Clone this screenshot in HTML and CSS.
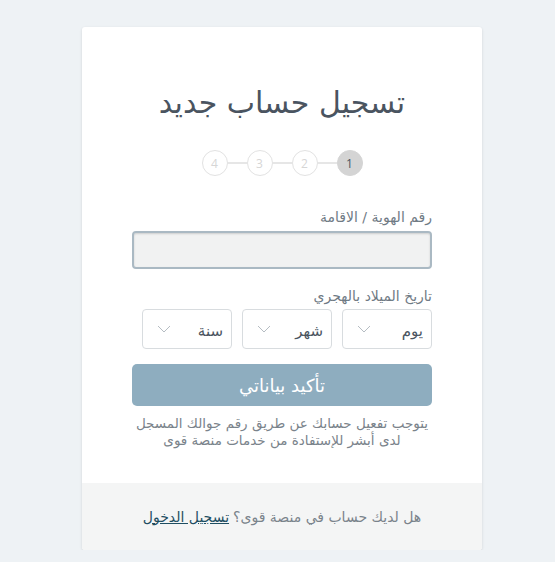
FILE: index.html
```html
<!DOCTYPE html>
<html lang="ar" dir="rtl">

<head>
    <meta charset="UTF-8">
    <meta name="viewport" content="width=device-width, initial-scale=1.0">
    <title>تسجيل حساب جديد</title>
    <link rel="stylesheet" href="styles.css">
</head>

<body>
    <div class="card">
        <div class="card-body">
            <h1 class="title">تسجيل حساب جديد</h1>

            <div class="steps">
                <span class="step active">1</span>
                <span class="step-line"></span>
                <span class="step">2</span>
                <span class="step-line"></span>
                <span class="step">3</span>
                <span class="step-line"></span>
                <span class="step">4</span>
            </div>

            <div class="form-group">
                <label for="id-number">رقم الهوية / الاقامة</label>
                <input type="text" id="id-number" class="id-input">
            </div>

            <div class="form-group">
                <label>تاريخ الميلاد بالهجري</label>
                <div class="date-row">
                    <div class="select">
                        <span>يوم</span>
                        <svg width="14" height="8" viewBox="0 0 14 8"><path d="M1 1l6 6 6-6" fill="none" stroke="#b5bcc2" stroke-width="1"/></svg>
                    </div>
                    <div class="select">
                        <span>شهر</span>
                        <svg width="14" height="8" viewBox="0 0 14 8"><path d="M1 1l6 6 6-6" fill="none" stroke="#b5bcc2" stroke-width="1"/></svg>
                    </div>
                    <div class="select">
                        <span>سنة</span>
                        <svg width="14" height="8" viewBox="0 0 14 8"><path d="M1 1l6 6 6-6" fill="none" stroke="#b5bcc2" stroke-width="1"/></svg>
                    </div>
                </div>
            </div>

            <button class="submit-btn">تأكيد بياناتي</button>

            <p class="note">يتوجب تفعيل حسابك عن طريق رقم جوالك المسجل<br>لدى أبشر للإستفادة من خدمات منصة قوى</p>
        </div>

        <div class="card-footer">
            هل لديك حساب في منصة قوى؟ <a href="#">تسجيل الدخول</a>
        </div>
    </div>
</body>

</html>
```

FILE: styles.css
```css
body {
    font-family: "DejaVu Sans", sans-serif;
    margin: 0;
    padding: 27px 0 0;
    background-color: #eef2f5;
    color: #4a5560;
}

.card {
    width: 400px;
    margin: 0 auto 0 82px;
    background: #ffffff;
    border-radius: 3px;
    box-shadow: 0 1px 3px rgba(0, 0, 0, 0.12);
}

.card-body {
    padding: 56px 50px 34px 50px;
}

.title {
    margin: 0;
    text-align: center;
    font-size: 30px;
    font-weight: normal;
    line-height: 40px;
    color: #4a5460;
}

.steps {
    display: flex;
    align-items: center;
    justify-content: center;
    margin: 27px 0 0;
}

.step {
    width: 24px;
    height: 24px;
    border: 1px solid #e2e2e2;
    border-radius: 50%;
    display: flex;
    align-items: center;
    justify-content: center;
    font-family: "Open Sans", sans-serif;
    font-size: 12px;
    color: #d6d6d6;
}

.step.active {
    background: #d4d4d4;
    border-color: #d4d4d4;
    color: #4a5460;
}

.step-line {
    width: 19px;
    height: 2px;
    background: #e6e6e6;
}

.form-group {
    margin-top: 34px;
}

.form-group + .form-group {
    margin-top: 20px;
}

label {
    display: block;
    font-size: 14px;
    line-height: 15px;
    color: #6f7a84;
    margin-bottom: 6px;
}

.form-group + .form-group label {
    margin-bottom: 5px;
}

.id-input {
    box-sizing: border-box;
    width: 100%;
    height: 38px;
    background: #f1f2f2;
    border: 2px solid #aab9c3;
    border-radius: 4px;
    box-shadow: inset 0 1px 2px rgba(0, 0, 0, 0.15);
}

.date-row {
    display: flex;
    gap: 10px;
    padding-left: 10px;
}

.select {
    flex: 1;
    height: 40px;
    box-sizing: border-box;
    border: 1px solid #d8dcdf;
    border-radius: 4px;
    display: flex;
    align-items: center;
    justify-content: space-between;
    padding: 0 8px 0 14px;
    font-size: 15px;
    color: #4a5460;
}

.select span {
    margin-top: 3px;
}

.submit-btn {
    display: block;
    width: 100%;
    height: 42px;
    margin-top: 15px;
    background-color: #8eadbf;
    color: #ffffff;
    border: none;
    border-radius: 5px;
    font-family: inherit;
    font-size: 18px;
    cursor: pointer;
}

.note {
    margin: 9px -10px 0;
    text-align: center;
    white-space: nowrap;
    font-size: 13.5px;
    line-height: 17px;
    color: #7a838b;
}

.card-footer {
    background: #f4f5f5;
    height: 67px;
    display: flex;
    align-items: center;
    justify-content: center;
    gap: 4px;
    font-size: 14px;
    color: #7a838b;
    border-radius: 0 0 3px 3px;
}

.card-footer a {
    color: #1e4e62;
}
```
